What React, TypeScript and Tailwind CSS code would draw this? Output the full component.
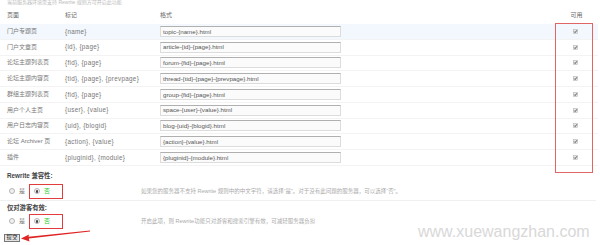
import React from 'react';

const rows = [
  { page: '门户专题页', mark: '{name}', format: 'topic-{name}.html' },
  { page: '门户文章页', mark: '{id}, {page}', format: 'article-{id}-{page}.html' },
  { page: '论坛主题列表页', mark: '{fid}, {page}', format: 'forum-{fid}-{page}.html' },
  { page: '论坛主题内容页', mark: '{tid}, {page}, {prevpage}', format: 'thread-{tid}-{page}-{prevpage}.html' },
  { page: '群组主题列表页', mark: '{fid}, {page}', format: 'group-{fid}-{page}.html' },
  { page: '用户个人主页', mark: '{user}, {value}', format: 'space-{user}-{value}.html' },
  { page: '用户日志内容页', mark: '{uid}, {blogid}', format: 'blog-{uid}-{blogid}.html' },
  { page: '论坛 Archiver 页', mark: '{action}, {value}', format: '{action}-{value}.html' },
  { page: '插件', mark: '{pluginid}, {module}', format: '{pluginid}-{module}.html' },
];

const Check = () => (
  <svg width="5" height="5" viewBox="0 0 5 5">
    <rect x="0.3" y="0.3" width="4.4" height="4.4" fill="#e8e8e8" stroke="#b0b0b0" strokeWidth="0.5" />
    <path d="M1.1 2.6 L2.1 3.6 L3.9 1.3" fill="none" stroke="#444" strokeWidth="0.9" />
  </svg>
);

const Radio = ({ checked }: { checked?: boolean }) => (
  <span className="flex h-[6px] w-[6px] items-center justify-center rounded-full border-[0.6px] border-[#b5b5b5] bg-[#f0f0f0]">
    {checked && <span className="h-[2.5px] w-[2.5px] rounded-full bg-[#444]" />}
  </span>
);

const RadioRow = ({ desc }: { desc: string }) => (
  <div className="grid h-[15px] grid-cols-[141px_1fr] items-center">
    <div className="flex h-full items-center pl-[9px]">
      <Radio />
      <span className="ml-[4px] text-[6px] text-[#777]">是</span>
      <span className="ml-[4px] flex h-[15px] w-[34px] items-center border-[1.5px] border-[#e23c3c] pl-[4px]">
        <Radio checked />
        <span className="ml-[4px] text-[6px] text-[#3c3]">否</span>
      </span>
    </div>
    <span className="whitespace-nowrap text-[5.5px] text-[#aaa]">{desc}</span>
  </div>
);

export default function App() {
  return (
    <div className="relative h-[245px] w-[600px] overflow-hidden bg-white font-['Liberation_Sans','Noto_Sans_CJK_SC',sans-serif] text-[#777]">
      <p className="h-[7px] whitespace-nowrap pl-[7px] text-[5px] leading-[5px] text-[#bbb]">
        当前服务器环境需支持 Rewrite 规则方可开启此功能
      </p>

      {/* rules table */}
      <div className="w-[598px]">
        <div className="grid h-[17px] grid-cols-[65px_95px_1fr_43px] items-center text-[6px] text-[#666]">
          <span className="pl-[7px]">页面</span>
          <span>标记</span>
          <span>格式</span>
          <span className="text-center">可用</span>
        </div>
        {rows.map((row, i) => (
          <div
            key={row.page}
            className={`grid h-[15.75px] grid-cols-[65px_95px_1fr_43px] items-center border-b border-[#f3f3f3] text-[6px] ${i === 0 ? 'bg-[#f2f8fd]' : ''}`}
          >
            <span className="whitespace-nowrap pl-[7px]">{row.page}</span>
            <span className="whitespace-nowrap text-[6.3px] tracking-[0.3px]">{row.mark}</span>
            <span>
              <span className="flex h-[11px] w-[181px] items-center border border-[#dcdcdc] border-t-[#b0b0b0] bg-[#fbfbfb] pl-[2px] text-[6.2px] text-[#555]">
                {row.format}
              </span>
            </span>
            <span className="flex justify-center pr-[2px]">
              <Check />
            </span>
          </div>
        ))}
      </div>

      {/* rewrite options */}
      <div className="mt-[5px] h-[9px] pl-[7px] text-[6.3px] font-bold leading-[9px] text-[#444]">Rewrite 兼容性:</div>
      <div className="mt-[4px] w-[596px] border-b border-[#f0f0f0] pb-[1px]">
        <RadioRow desc="如果您的服务器不支持 Rewrite 规则中的中文字符，请选择“是”。对于没有此问题的服务器，可以选择“否”。" />
      </div>
      <div className="mt-[2px] h-[9px] pl-[7px] text-[6.3px] font-bold leading-[9px] text-[#444]">仅对游客有效:</div>
      <div className="mt-[2px]">
        <RadioRow desc="开启此项，则 Rewrite功能只对游客和搜索引擎有效，可减轻服务器负担" />
      </div>
      <div className="mt-[5px] pl-[4px]">
        <button className="flex h-[8px] w-[16px] items-center justify-center border border-[#777] bg-[#e6e6e6] text-[5.5px] leading-none text-[#222]">
          提交
        </button>
      </div>

      {/* annotations */}
      <div className="absolute left-[555px] top-[23px] h-[150px] w-[38px] border-[1.5px] border-[#e06666]" />
      <svg className="absolute left-0 top-0" width="600" height="245" viewBox="0 0 600 245">
        <polygon points="21,238.5 29,234.5 28.5,236.8 90,230.6 90,231.6 28.8,238.6 29.5,241.5" fill="#e02424" />
      </svg>
      <div className="absolute left-[418px] top-[222px] whitespace-nowrap text-[16px] leading-[20px] text-[#d8d8d8]">
        www.xuewangzhan.com
      </div>
    </div>
  );
}
